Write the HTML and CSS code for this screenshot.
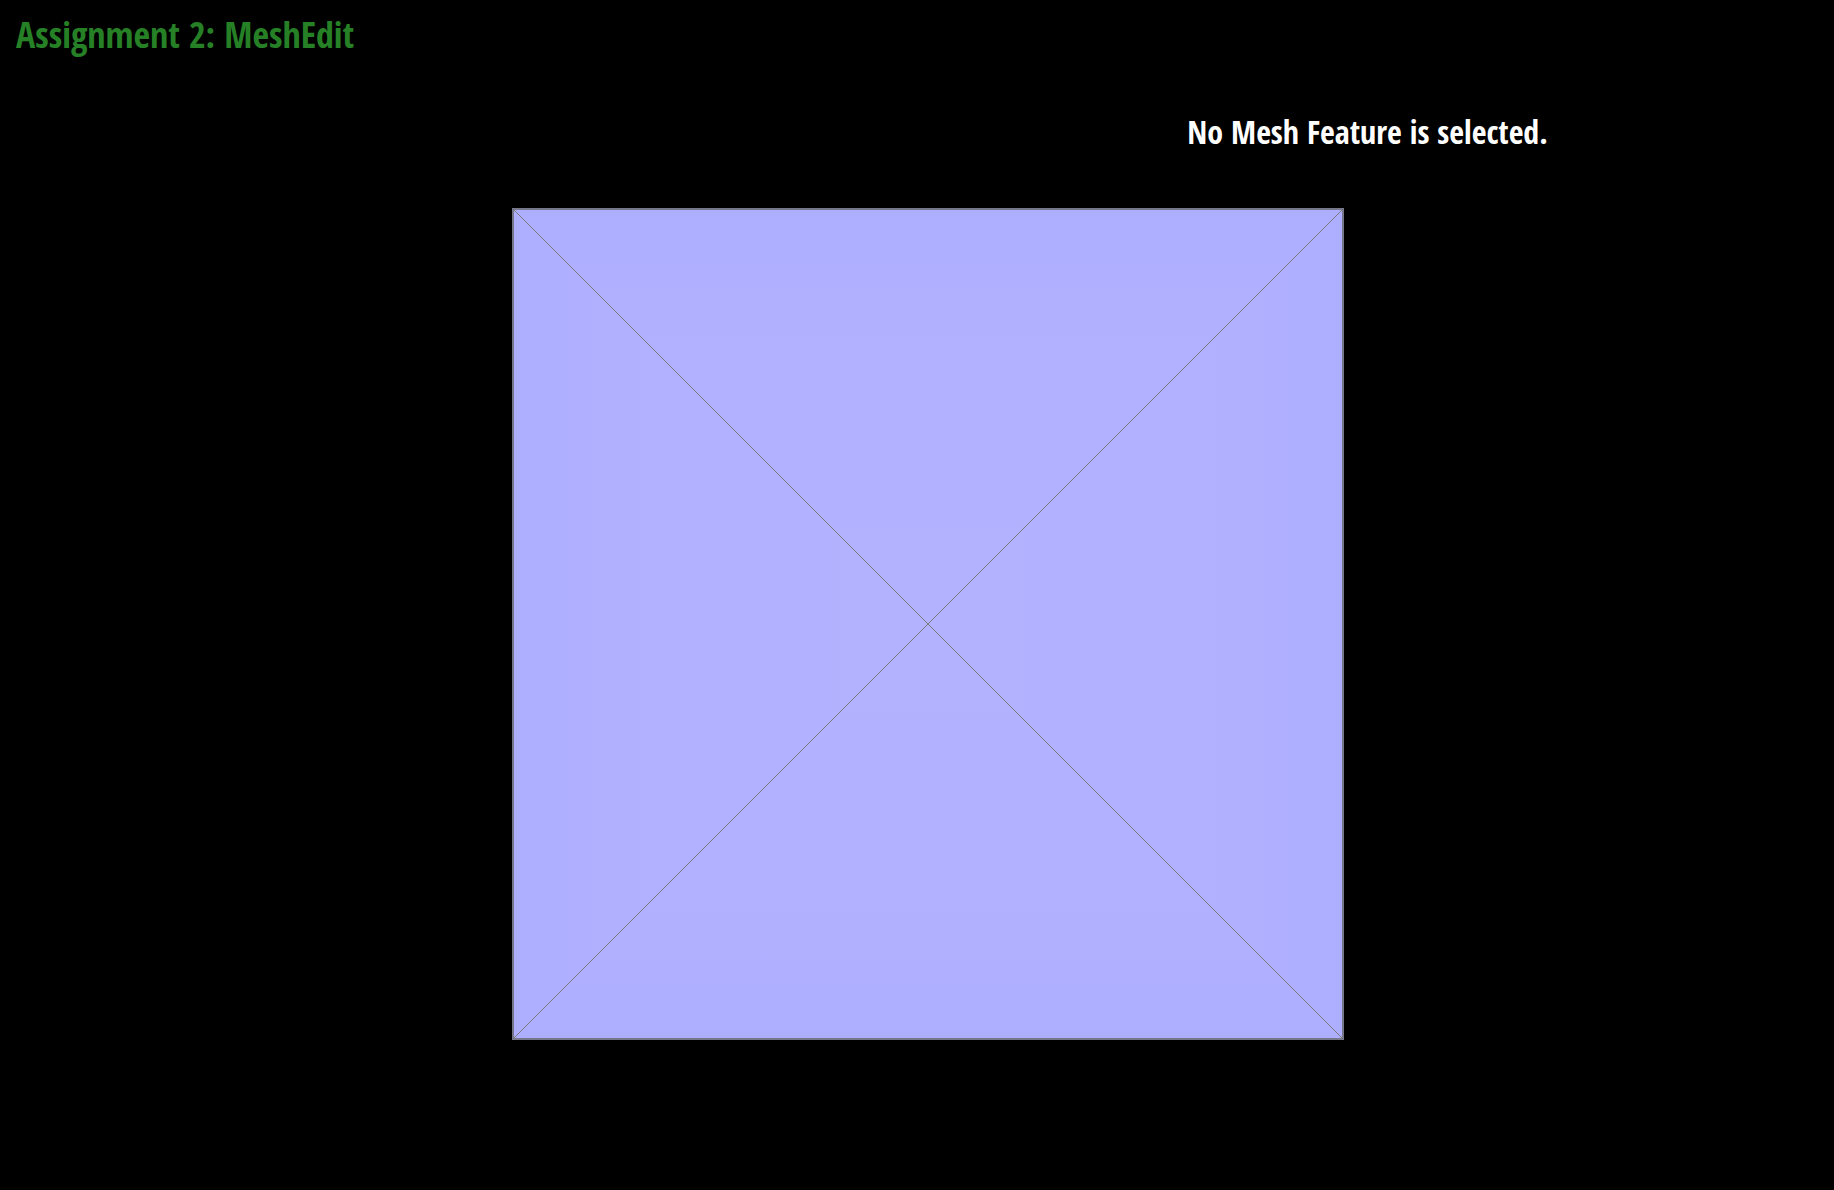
FILE: index.html
```
<!DOCTYPE html>
<html lang="en">
<head>
<meta charset="utf-8">
<title>MeshEdit</title>
<link rel="stylesheet" href="styles.css">
</head>
<body>
<header class="header">
<h1 class="title">Assignment 2: MeshEdit</h1>
<p class="status">No Mesh Feature is selected.</p>
</header>
<main class="viewport">
<svg class="mesh" viewBox="0 0 832 832" role="img" aria-label="Square mesh with four triangular faces">
<defs>
<linearGradient id="vertical" x1="0" y1="0" x2="0" y2="1">
<stop offset="0" stop-color="#aeaeff"/>
<stop offset="0.12" stop-color="#b1b0ff"/>
<stop offset="0.5" stop-color="#b3b2ff"/>
<stop offset="0.88" stop-color="#b1b0ff"/>
<stop offset="1" stop-color="#aeaeff"/>
</linearGradient>
<linearGradient id="horizontal" gradientUnits="userSpaceOnUse" x1="0" y1="0" x2="832" y2="0">
<stop offset="0" stop-color="#aeaeff"/>
<stop offset="0.12" stop-color="#b1b0ff"/>
<stop offset="0.5" stop-color="#b3b2ff"/>
<stop offset="0.88" stop-color="#b1b0ff"/>
<stop offset="1" stop-color="#aeaeff"/>
</linearGradient>
</defs>
<rect width="832" height="832" fill="url(#vertical)"/>
<path d="M0 0L416 416L0 832ZM832 0L416 416L832 832Z" fill="url(#horizontal)"/>
<path class="edge" d="M1 1L831 831M831 1L1 831"/>
<rect class="outline" x="1" y="1" width="830" height="830"/>
</svg>
</main>
</body>
</html>
```
FILE: styles.css
```
body {
  margin: 0;
  background: #000;
  color: #fff;
  font-family: "Open Sans Condensed", "Noto Sans Condensed", "Open Sans", sans-serif;
  font-weight: 700;
}

.header {
  padding: 11px 16px 0;
}

.title {
  margin: 0;
  color: #268026;
  font-size: 36px;
  line-height: 48px;
}

.status {
  margin: 51px 0 0 65%;
  font-size: 32px;
  line-height: 44px;
}

.viewport {
  display: flex;
  justify-content: center;
  padding: 54px 0 64px 22px;
}

.mesh {
  display: block;
  width: 100%;
  max-width: 832px;
}

.edge {
  fill: none;
  stroke: #7c7c74;
  stroke-width: 1;
}

.outline {
  fill: none;
  stroke: #77778a;
  stroke-width: 2;
}
```
